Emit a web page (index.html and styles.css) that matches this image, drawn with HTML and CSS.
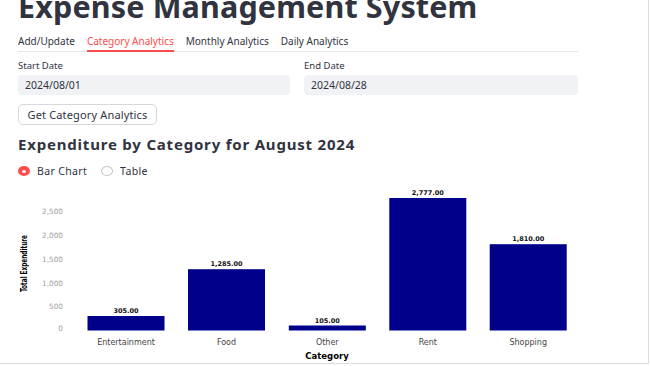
FILE: index.html
```html
<!DOCTYPE html>
<html lang="en">
<head>
<meta charset="utf-8">
<title>Expense Management System</title>
<link rel="stylesheet" href="styles.css">
</head>
<body>
<div class="frame">
  <div class="main">
    <h1 class="title">Expense Management System</h1>
    <div class="tabs">
      <span class="tab">Add/Update</span>
      <span class="tab active">Category Analytics</span>
      <span class="tab">Monthly Analytics</span>
      <span class="tab">Daily Analytics</span>
    </div>
    <div class="dates">
      <div class="field">
        <div class="label">Start Date</div>
        <div class="input">2024/08/01</div>
      </div>
      <div class="field">
        <div class="label">End Date</div>
        <div class="input">2024/08/28</div>
      </div>
    </div>
    <button class="btn">Get Category Analytics</button>
    <h2 class="subtitle">Expenditure by Category for August 2024</h2>
    <div class="radios">
      <span class="radio"><span class="dot on"></span>Bar Chart</span>
      <span class="radio"><span class="dot"></span>Table</span>
    </div>
    <svg class="chart" width="560" height="178" viewBox="18 185 560 178">
      <g class="ticks">
        <text x="63" y="214">2,500</text>
        <text x="63" y="238">2,000</text>
        <text x="63" y="261.7">1,500</text>
        <text x="63" y="285.7">1,000</text>
        <text x="63" y="309.2">500</text>
        <text x="63" y="331.2">0</text>
      </g>
      <g class="bars">
        <rect x="87.5" y="316" width="77" height="14.5"></rect>
        <rect x="188" y="269.2" width="77" height="61.3"></rect>
        <rect x="288.8" y="325.5" width="77" height="5"></rect>
        <rect x="389.3" y="198" width="77" height="132.5"></rect>
        <rect x="489.7" y="244.2" width="77" height="86.3"></rect>
      </g>
      <g class="values">
        <text x="126" y="313">305.00</text>
        <text x="226.5" y="266.2">1,285.00</text>
        <text x="327.3" y="322.5">105.00</text>
        <text x="427.8" y="195">2,777.00</text>
        <text x="528.2" y="241.2">1,810.00</text>
      </g>
      <g class="cats">
        <text x="126" y="345">Entertainment</text>
        <text x="226.5" y="345">Food</text>
        <text x="327.3" y="345">Other</text>
        <text x="427.8" y="345">Rent</text>
        <text x="528.2" y="345">Shopping</text>
      </g>
      <text class="xtitle" x="327" y="359">Category</text>
      <text class="ytitle" transform="translate(26.6,263.5) rotate(-90)" x="0" y="0" textLength="57" lengthAdjust="spacingAndGlyphs">Total Expenditure</text>
    </svg>
  </div>
</div>
</body>
</html>
```
FILE: styles.css
```css
html, body {
  margin: 0;
  padding: 0;
  background: #ffffff;
}
body {
  font-family: "Noto Sans", "Open Sans", sans-serif;
  color: #31333f;
  overflow: hidden;
}
.frame {
  width: 648px;
  height: 363px;
  border-right: 1px solid #dcdcdc;
  border-bottom: 1px solid #dcdcdc;
  overflow: hidden;
}
.main {
  width: 560px;
  margin-left: 18px;
}
.title {
  margin: -7px 0 0;
  font-size: 30.5px;
  letter-spacing: 0.15px;
  line-height: 27px;
  height: 27px;
  font-weight: 700;
  white-space: nowrap;
  color: #31333f;
}
.tabs {
  margin-top: 15px;
  display: flex;
  gap: 12px;
  border-bottom: 1px solid #e6e7ea;
  height: 16px;
}
.tab {
  font-size: 10px;
  line-height: 12px;
  padding-bottom: 3px;
  white-space: nowrap;
  color: #31333f;
}
.tab.active {
  color: #ff4b4b;
  border-bottom: 2px solid #ff4b4b;
  height: 12px;
}
.dates {
  margin-top: 8px;
  display: grid;
  grid-template-columns: 272px 274px;
  column-gap: 14px;
}
.label {
  font-size: 9.5px;
  line-height: 12px;
  margin-bottom: 3px;
}
.input {
  height: 20px;
  box-sizing: border-box;
  background: #f0f2f6;
  border-radius: 4px;
  font-size: 10.5px;
  line-height: 20px;
  padding-left: 7px;
}
.btn {
  display: block;
  margin-top: 9px;
  height: 21px;
  width: 139px;
  box-sizing: border-box;
  background: #ffffff;
  border: 1px solid #d6d8dd;
  border-radius: 5px;
  font-family: "Noto Sans", "Open Sans", sans-serif;
  font-size: 11px;
  letter-spacing: 0.15px;
  color: #31333f;
  padding: 0;
  line-height: 19px;
}
.subtitle {
  margin: 10px 0 0;
  font-size: 15px;
  letter-spacing: 0.8px;
  line-height: 18px;
  height: 18px;
  font-weight: 700;
  white-space: nowrap;
}
.radios {
  margin-top: 12px;
  display: flex;
  gap: 14px;
  height: 12px;
  align-items: center;
}
.radio {
  display: flex;
  align-items: center;
  gap: 7px;
  font-size: 10.5px;
  letter-spacing: 0.35px;
  line-height: 12px;
}
.dot {
  width: 12px;
  height: 10px;
  box-sizing: border-box;
  border-radius: 50%;
  border: 1px solid #c4c6cc;
  background: #fff;
  position: relative;
}
.dot.on {
  border: none;
  background: #ff4b4b;
}
.dot.on::after {
  content: "";
  position: absolute;
  left: 4px;
  top: 3.5px;
  width: 4px;
  height: 3px;
  border-radius: 50%;
  background: #fff;
}
.chart {
  display: block;
  margin-top: 8px;
}
.ticks text {
  font-family: "DejaVu Sans", sans-serif;
  font-size: 7.3px;
  fill: #9d9d9d;
  text-anchor: end;
}
.bars rect {
  fill: #00008b;
}
.values text {
  font-family: "DejaVu Sans", sans-serif;
  font-weight: 700;
  font-size: 6.5px;
  fill: #111;
  text-anchor: middle;
}
.cats text {
  font-family: "DejaVu Sans", sans-serif;
  font-size: 8px;
  fill: #444;
  text-anchor: middle;
}
.xtitle {
  font-family: "DejaVu Sans", sans-serif;
  font-weight: 700;
  font-size: 8.5px;
  fill: #000;
  text-anchor: middle;
}
.ytitle {
  font-family: "Liberation Sans Narrow", "DejaVu Sans Condensed", "Liberation Sans", sans-serif;
  font-weight: 700;
  font-size: 8.2px;
  fill: #000;
  text-anchor: middle;
}
```
